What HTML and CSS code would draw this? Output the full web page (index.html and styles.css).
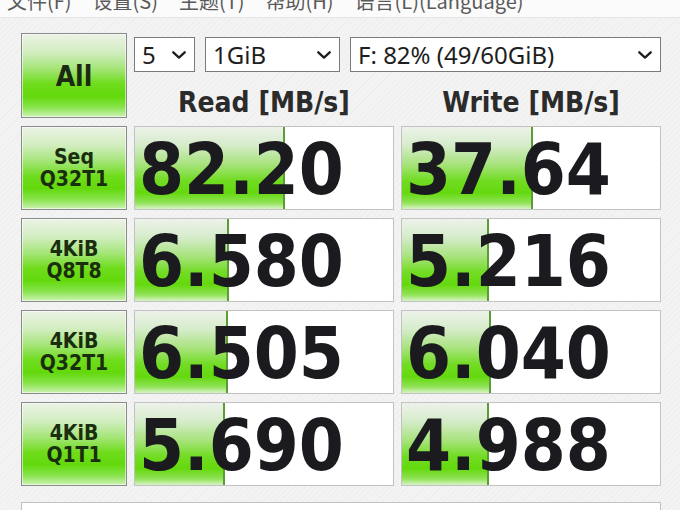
FILE: index.html
```html
<!DOCTYPE html>
<html lang="zh-CN">
<head>
<meta charset="utf-8">
<title>CrystalDiskMark</title>
<link rel="stylesheet" href="styles.css">
</head>
<body>
<div class="menubar">
  <div class="menu-items">
    <span class="menu-item">文件(F)</span>
    <span class="menu-item">设置(S)</span>
    <span class="menu-item">主题(T)</span>
    <span class="menu-item">帮助(H)</span>
    <span class="menu-item">语言(L)(Language)</span>
  </div>
</div>
<div class="main">
  <div class="grid">
    <div class="btn all">All</div>
    <div class="top-right">
      <div class="selects">
        <div class="select sel-count"><span>5</span><svg class="chev" viewBox="0 0 14 8" width="14" height="8"><polyline points="1.3,1.3 7,6.6 12.7,1.3"/></svg></div>
        <div class="select sel-size"><span>1GiB</span><svg class="chev" viewBox="0 0 14 8" width="14" height="8"><polyline points="1.3,1.3 7,6.6 12.7,1.3"/></svg></div>
        <div class="select sel-drive"><span>F: 82% (49/60GiB)</span><svg class="chev" viewBox="0 0 14 8" width="14" height="8"><polyline points="1.3,1.3 7,6.6 12.7,1.3"/></svg></div>
      </div>
      <div class="headers">
        <div class="head">Read [MB/s]</div>
        <div class="head">Write [MB/s]</div>
      </div>
    </div>

    <div class="btn label">Seq<br>Q32T1</div>
    <div class="value" style="--fill:150px">82.20</div>
    <div class="value" style="--fill:131px">37.64</div>

    <div class="btn label">4KiB<br>Q8T8</div>
    <div class="value" style="--fill:94px">6.580</div>
    <div class="value" style="--fill:87px">5.216</div>

    <div class="btn label">4KiB<br>Q32T1</div>
    <div class="value" style="--fill:93px">6.505</div>
    <div class="value" style="--fill:89px">6.040</div>

    <div class="btn label">4KiB<br>Q1T1</div>
    <div class="value" style="--fill:90px">5.690</div>
    <div class="value" style="--fill:87px">4.988</div>
  </div>
  <div class="comment"></div>
</div>
</body>
</html>
```
FILE: styles.css
```css
html, body {
  margin: 0;
  padding: 0;
}
body {
  width: 680px;
  height: 510px;
  overflow: hidden;
  background-color: #f3f3f3;
  background-image: repeating-linear-gradient(135deg, rgba(0,0,0,0.018) 0 1px, transparent 1px 4px);
  font-family: "DejaVu Sans Condensed", "DejaVu Sans", sans-serif;
  font-stretch: condensed;
}
.menubar {
  height: 17px;
  overflow: hidden;
  background: #fbfbfb;
  border-bottom: 1px solid #e4e4e4;
}
.menu-items {
  display: flex;
  gap: 21px;
  margin-top: -9px;
  padding-left: 7px;
  font-family: "Noto Sans CJK SC", "Noto Sans", sans-serif;
  font-stretch: normal;
  font-size: 20px;
  line-height: 20px;
  color: #5a5a5a;
  white-space: nowrap;
}
.main {
  padding: 15px 0 0 21px;
}
.grid {
  display: grid;
  grid-template-columns: 106px 260px 260px;
  grid-template-rows: 85px repeat(4, 84px);
  column-gap: 7px;
  row-gap: 8px;
}
.btn {
  box-sizing: border-box;
  border: 1px solid #8a8a8a;
  box-shadow: inset 0 0 0 1px rgba(255,255,255,0.55);
  background: linear-gradient(to bottom,
    #ecf3e6 0%, #d2edc0 22%, #a4e577 42%, #6fdc1c 60%, #63d90c 75%, #86e34a 88%, #cdf2b4 100%);
  display: flex;
  align-items: center;
  justify-content: center;
  text-align: center;
  color: #1a2e0f;
  font-weight: bold;
}
.all {
  font-size: 28px;
  color: #1b2a12;
  padding-top: 2px;
}
.label {
  font-size: 21px;
  line-height: 22px;
}
.top-right {
  grid-column: 2 / span 2;
}
.selects {
  display: flex;
  gap: 10px;
  margin-top: 4px;
  height: 35px;
}
.select {
  box-sizing: border-box;
  height: 35px;
  background: #fff;
  border: 1px solid #7a7a7a;
  display: flex;
  align-items: center;
  justify-content: space-between;
  padding: 0 8px 0 7px;
  font-family: "Noto Sans", sans-serif;
  font-stretch: normal;
  font-size: 24px;
  color: #1e1e1e;
}
.sel-count { width: 61px; }
.sel-size { width: 135px; }
.sel-drive { width: 311px; }
.chev {
  flex: none;
  fill: none;
  stroke: #1e1e1e;
  stroke-width: 2.3;
  stroke-linecap: round;
  stroke-linejoin: round;
}
.headers {
  display: grid;
  grid-template-columns: 260px 260px;
  column-gap: 7px;
  padding-top: 15px;
}
.head {
  text-align: center;
  font-weight: bold;
  font-size: 28px;
  line-height: 32px;
  color: #2b2b2b;
}
.value {
  box-sizing: border-box;
  border: 1px solid #c2c2c2;
  background:
    linear-gradient(#5b9c36, #5b9c36) no-repeat calc(var(--fill) - 2px) 0 / 2px 100%,
    linear-gradient(to bottom,
      #edf2ea 0%, #d6eccb 22%, #a9e37f 45%, #72dc24 65%, #64d90e 80%, #8ee253 92%, #d8f3c6 100%) no-repeat 0 0 / var(--fill) 100%,
    #ffffff;
  display: flex;
  align-items: center;
  padding: 2px 0 0 4px;
  font-weight: bold;
  font-size: 72px;
  line-height: 80px;
  color: #1b1b1f;
}
.comment {
  box-sizing: border-box;
  margin-top: 16px;
  width: 640px;
  height: 40px;
  background: #fff;
  border: 1px solid #c2c2c2;
}
```
